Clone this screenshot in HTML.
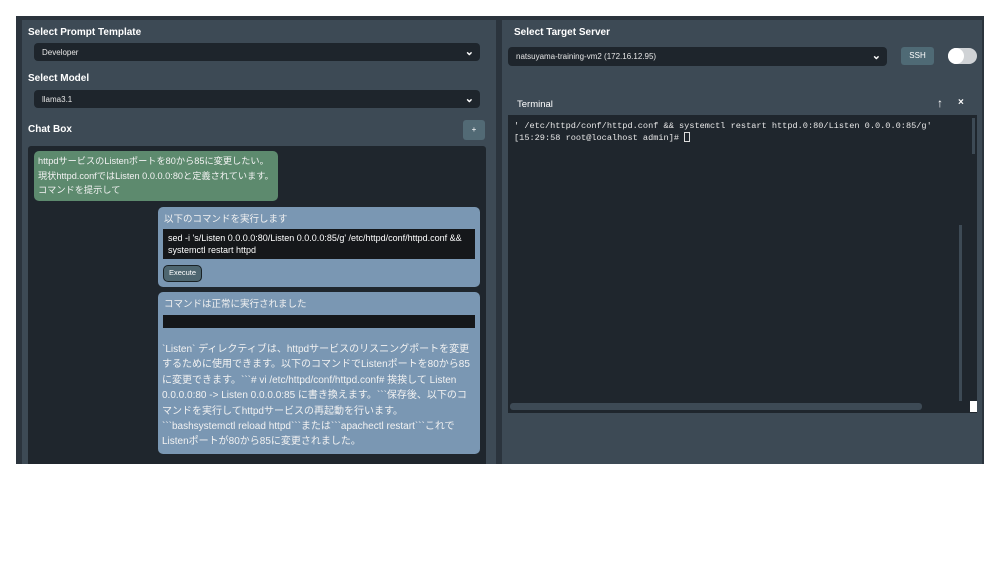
<!DOCTYPE html>
<html><head><meta charset="utf-8"><style>
*{box-sizing:border-box;margin:0;padding:0}
body{width:1000px;height:563px;background:#fff;font-family:"Liberation Sans","Noto Sans CJK JP",sans-serif;position:relative;overflow:hidden}
.abs{position:absolute}
.outer{left:16px;top:16px;width:968px;height:448px;background:#2b343d}
.panel{background:#3d4a55}
.lbl{color:#fff;font-weight:bold;font-size:10px}
.sel{background:#1e252c;border-radius:4px;color:#e6e6e6;font-size:8px;padding:0 0 0 8px;display:flex;align-items:center}
.sel:after{content:"⌄";position:absolute;right:6px;top:2px;color:#fff;font-size:11px;font-weight:bold}
.msg{border-radius:5px;color:#f2f2f2;font-size:10px;line-height:15.5px}
.code{background:#15171a;color:#fff;font-size:9px;line-height:12px;padding:3px 5px;white-space:nowrap}
.term{font-family:"Liberation Mono",monospace;color:#e6e6e6;font-size:8.6px;line-height:10.5px;white-space:nowrap}
</style></head><body>
<div class="abs outer"></div>
<div class="abs panel" style="left:22px;top:20px;width:474px;height:444px"></div>
<div class="abs panel" style="left:502px;top:20px;width:480px;height:444px"></div>

<div class="abs lbl" style="left:28px;top:27px">Select Prompt Template</div>
<div class="abs sel" style="left:34px;top:43px;width:446px;height:18px">Developer</div>
<div class="abs lbl" style="left:28px;top:73px">Select Model</div>
<div class="abs sel" style="left:34px;top:90px;width:446px;height:18px">llama3.1</div>
<div class="abs lbl" style="left:28px;top:124px">Chat Box</div>
<div class="abs" style="left:463px;top:120px;width:22px;height:20px;background:#526a75;border-radius:3px;color:#fff;font-size:8px;text-align:center;line-height:20px">+</div>

<div class="abs" style="left:28px;top:146px;width:458px;height:318px;background:#1f262d;border-radius:3px 3px 0 0"></div>
<div class="abs msg" style="left:34px;top:151px;width:244px;height:50px;background:#5d8a6e;padding:3px 4px;line-height:14.5px;font-size:9.2px;white-space:nowrap">httpdサービスのListenポートを80から85に変更したい。<br>現状httpd.confではListen 0.0.0.0:80と定義されています。<br>コマンドを提示して</div>

<div class="abs msg" style="left:158px;top:207px;width:322px;height:80px;background:#7a97b3"></div>
<div class="abs" style="left:164px;top:211px;color:#f2f2f2;font-size:9.5px">以下のコマンドを実行します</div>
<div class="abs code" style="left:163px;top:229px;width:312px;height:30px">sed -i 's/Listen 0.0.0.0:80/Listen 0.0.0.0:85/g' /etc/httpd/conf/httpd.conf &amp;&amp;<br>systemctl restart httpd</div>
<div class="abs" style="left:163px;top:265px;width:39px;height:17px;background:#4e6670;border:1.5px solid #1a2226;border-radius:5px;color:#fff;font-size:7.5px;text-align:center;line-height:14px">Execute</div>

<div class="abs msg" style="left:158px;top:292px;width:322px;height:162px;background:#7a97b3"></div>
<div class="abs" style="left:164px;top:296px;color:#f2f2f2;font-size:9.5px">コマンドは正常に実行されました</div>
<div class="abs" style="left:163px;top:315px;width:312px;height:13px;background:#15171a"></div>
<div class="abs msg" style="left:162px;top:342px;width:314px;font-size:10px;line-height:15.4px">&#96;Listen&#96; ディレクティブは、httpdサービスのリスニングポートを変更するために使用できます。以下のコマンドでListenポートを80から85に変更できます。&#96;&#96;&#96;# vi /etc/httpd/conf/httpd.conf# 挨挨して Listen 0.0.0.0:80 -&gt; Listen 0.0.0.0:85 に書き換えます。&#96;&#96;&#96;保存後、以下のコマンドを実行してhttpdサービスの再起動を行います。&#96;&#96;&#96;bashsystemctl reload httpd&#96;&#96;&#96;または&#96;&#96;&#96;apachectl restart&#96;&#96;&#96;これでListenポートが80から85に変更されました。</div>

<div class="abs lbl" style="left:514px;top:27px">Select Target Server</div>
<div class="abs sel" style="left:508px;top:47px;width:379px;height:19px">natsuyama-training-vm2 (172.16.12.95)</div>
<div class="abs" style="left:901px;top:47px;width:33px;height:18px;background:#4f6a75;border-radius:3px;color:#fff;font-size:8px;text-align:center;line-height:18px">SSH</div>
<div class="abs" style="left:948px;top:48px;width:29px;height:16px;background:#d0d3d6;border-radius:8px"></div>
<div class="abs" style="left:948px;top:48px;width:16px;height:16px;background:#fff;border-radius:8px"></div>

<div class="abs" style="left:517px;top:99px;color:#fff;font-size:9.5px">Terminal</div>
<div class="abs" style="left:937px;top:96px;color:#fff;font-size:12px">↑</div>
<div class="abs" style="left:958px;top:97px;color:#fff;font-size:10px;font-weight:bold">×</div>
<div class="abs" style="left:508px;top:115px;width:469px;height:298px;background:#1f262d"></div>
<div class="abs term" style="left:514px;top:121px">' /etc/httpd/conf/httpd.conf &amp;&amp; systemctl restart httpd.0:80/Listen 0.0.0.0:85/g'<br>[15:29:58 root@localhost admin]# <span style="display:inline-block;width:6px;height:10px;border:1px solid #ddd;vertical-align:-2px"></span></div>
<div class="abs" style="left:959px;top:225px;width:3px;height:176px;background:#3d4a55"></div>
<div class="abs" style="left:972px;top:118px;width:3px;height:36px;background:#3d4a55"></div>
<div class="abs" style="left:510px;top:403px;width:412px;height:7px;background:#3d4a55;border-radius:3px"></div>
<div class="abs" style="left:970px;top:401px;width:7px;height:11px;background:#fff"></div>
</body></html>
